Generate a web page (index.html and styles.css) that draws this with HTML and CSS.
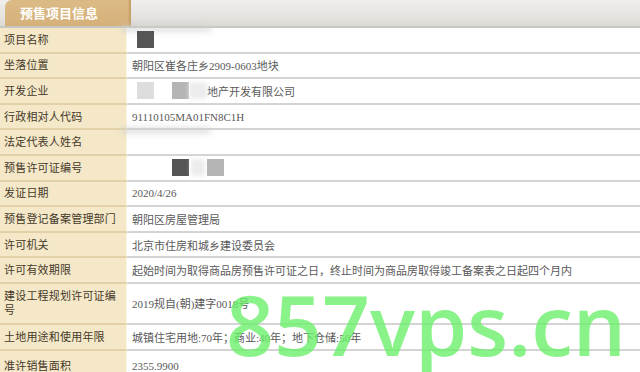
FILE: index.html
```html
<!DOCTYPE html>
<html lang="zh-CN">
<head>
<meta charset="utf-8">
<title>预售项目信息</title>
<link rel="stylesheet" href="styles.css">
</head>
<body>
<div class="page">
  <div class="tabbar">
    <div class="tab">预售项目信息</div>
  </div>
  <div class="table">
    <div class="row">
      <div class="label">项目名称</div>
      <div class="value"><span class="smudge"></span><span class="blk dark first"></span></div>
    </div>
    <div class="row">
      <div class="label">坐落位置</div>
      <div class="value">朝阳区崔各庄乡2909-0603地块</div>
    </div>
    <div class="row">
      <div class="label">开发企业</div>
      <div class="value"><span class="blk light first"></span><span class="blk mid gap"></span><span class="blk faint"></span>地产开发有限公司</div>
    </div>
    <div class="row">
      <div class="label">行政相对人代码</div>
      <div class="value">91110105MA01FN8C1H</div>
    </div>
    <div class="row">
      <div class="label">法定代表人姓名</div>
      <div class="value"><span class="smudge"></span></div>
    </div>
    <div class="row">
      <div class="label">预售许可证编号</div>
      <div class="value"><span class="blk dark far"></span><span class="blk faint small"></span><span class="blk mid"></span></div>
    </div>
    <div class="row">
      <div class="label">发证日期</div>
      <div class="value">2020/4/26</div>
    </div>
    <div class="row">
      <div class="label">预售登记备案管理部门</div>
      <div class="value">朝阳区房屋管理局</div>
    </div>
    <div class="row">
      <div class="label">许可机关</div>
      <div class="value">北京市住房和城乡建设委员会</div>
    </div>
    <div class="row">
      <div class="label">许可有效期限</div>
      <div class="value">起始时间为取得商品房预售许可证之日，终止时间为商品房取得竣工备案表之日起四个月内</div>
    </div>
    <div class="row tall">
      <div class="label">建设工程规划许可证编号</div>
      <div class="value">2019规自(朝)建字0018号</div>
    </div>
    <div class="row">
      <div class="label">土地用途和使用年限</div>
      <div class="value">城镇住宅用地:70年；商业:40年；地下仓储:50年</div>
    </div>
    <div class="row last">
      <div class="label">准许销售面积</div>
      <div class="value">2355.9900</div>
    </div>
  </div>
  <div class="watermark">857vps.cn</div>
</div>
</body>
</html>
```

FILE: styles.css
```css
html, body {
  margin: 0;
  padding: 0;
  background: #ffffff;
}

.page {
  position: relative;
  width: 640px;
  height: 372px;
  overflow: hidden;
  font-family: "Liberation Serif", "Noto Sans CJK SC", serif;
}

.tabbar {
  height: 26px;
  background: linear-gradient(#efeeec, #e4e2de 70%, #dcdad5);
  border-bottom: 2px solid #c8c6c1;
  display: flex;
  align-items: flex-end;
  padding-left: 5px;
}

.tab {
  width: 111px;
  height: 26px;
  padding-left: 15px;
  background: linear-gradient(#dcbb86, #d5b07a);
  border-top-left-radius: 7px;
  box-shadow: inset -3px 0 2px -1px #c49e66;
  color: #ffffff;
  font-family: "Noto Sans CJK SC", sans-serif;
  font-weight: 700;
  font-size: 13px;
  line-height: 26px;
}

.table {
  display: flex;
  flex-direction: column;
}

.row {
  display: grid;
  grid-template-columns: 127px 1fr;
  height: 25.6px;
}

.row.tall {
  height: 41px;
}

.row.last {
  height: 30px;
}

.label {
  box-sizing: border-box;
  background: #f4e8c8;
  border-bottom: 2px solid #e2d1a8;
  border-right: 1px solid #fbf4e2;
  padding-left: 4px;
  padding-right: 4px;
  display: flex;
  align-items: center;
  color: #45382a;
  font-size: 11px;
  line-height: 14px;
  letter-spacing: 0.2px;
}

.value {
  position: relative;
  box-sizing: border-box;
  border-bottom: 2px solid #d4d4d4;
  padding-left: 5px;
  display: flex;
  align-items: center;
  color: #595959;
  font-size: 11px;
  white-space: nowrap;
}

.row.last .label,
.row.last .value {
  border-bottom: none;
}

.blk {
  display: inline-block;
  width: 17px;
  height: 17px;
  flex: none;
  filter: blur(0.6px);
}

.blk.dark { background: #555555; }
.blk.light { background: #dddddd; }
.blk.mid { background: #b5b5b5; }
.blk.faint { background: #ececec; width: 18px; filter: blur(2px); }
.blk.small { width: 14px; margin: 0 2px; }

.blk.first { margin-left: 5px; }
.blk.gap { margin-left: 18px; }
.blk.far { margin-left: 40px; }

.smudge {
  position: absolute;
  left: -6px;
  top: -2px;
  width: 90px;
  height: 5px;
  background: #cfcfcf;
  filter: blur(3px);
  opacity: 0.8;
}

.watermark {
  position: absolute;
  left: 226px;
  top: 293px;
  font-family: "Open Sans", "Liberation Sans", sans-serif;
  font-weight: 600;
  font-size: 84px;
  line-height: 62px;
  color: rgba(104, 240, 104, 0.78);
  white-space: nowrap;
  pointer-events: none;
}
```
